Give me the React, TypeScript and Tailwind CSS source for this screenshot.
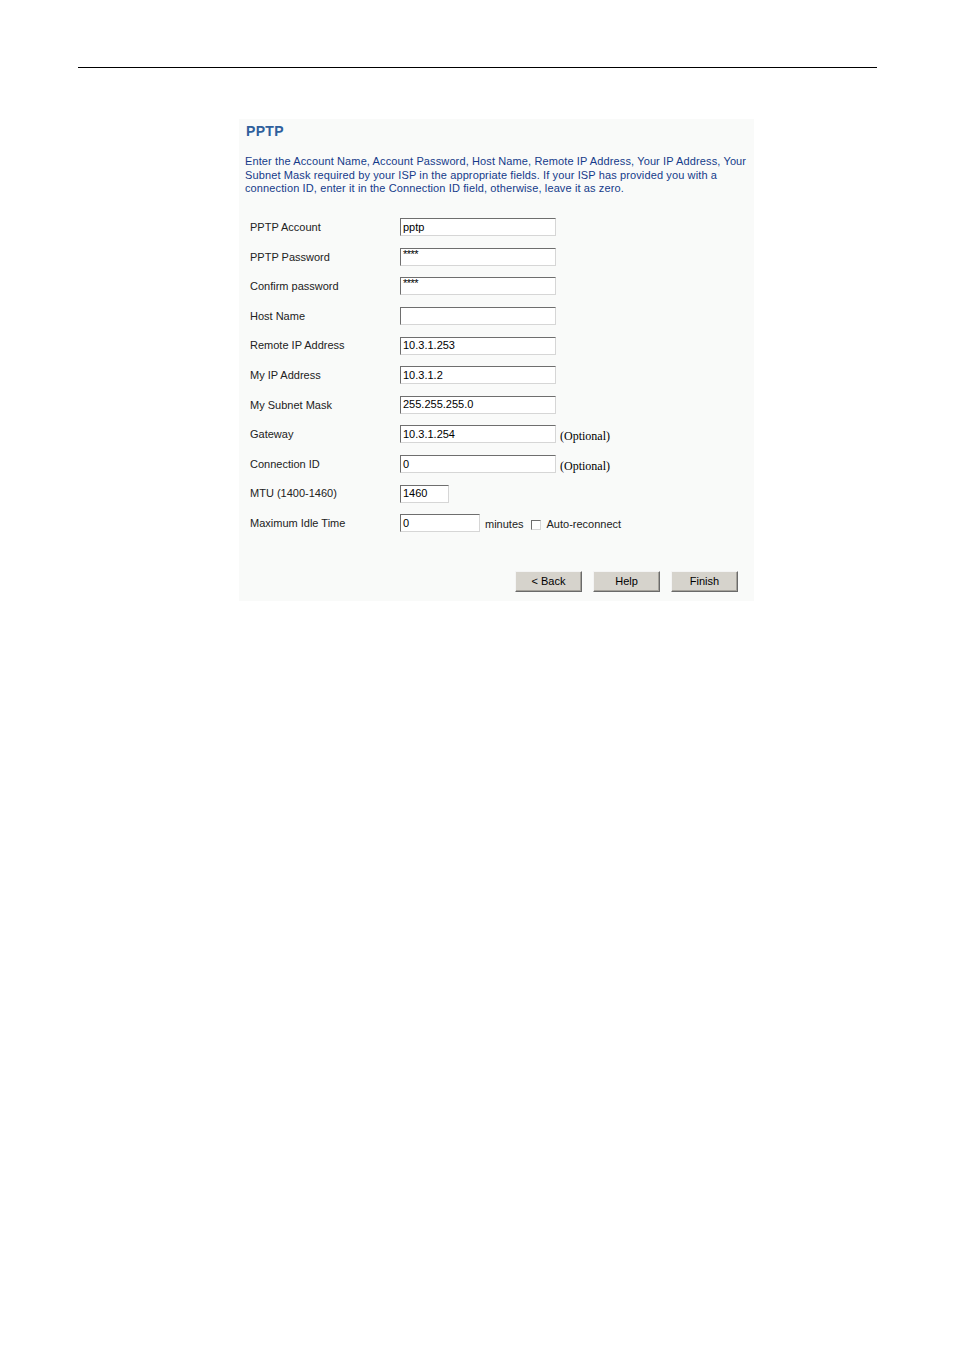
import React from 'react';

type Row = {
  label: string;
  value: string;
  width: string;
  suffix?: 'optional' | 'idle';
};

const rows: Row[] = [
  { label: 'PPTP Account', value: 'pptp', width: 'w-[156px]' },
  { label: 'PPTP Password', value: '****', width: 'w-[156px]' },
  { label: 'Confirm password', value: '****', width: 'w-[156px]' },
  { label: 'Host Name', value: '', width: 'w-[156px]' },
  { label: 'Remote IP Address', value: '10.3.1.253', width: 'w-[156px]' },
  { label: 'My IP Address', value: '10.3.1.2', width: 'w-[156px]' },
  { label: 'My Subnet Mask', value: '255.255.255.0', width: 'w-[156px]' },
  { label: 'Gateway', value: '10.3.1.254', width: 'w-[156px]', suffix: 'optional' },
  { label: 'Connection ID', value: '0', width: 'w-[156px]', suffix: 'optional' },
  { label: 'MTU (1400-1460)', value: '1460', width: 'w-[49px]' },
  { label: 'Maximum Idle Time', value: '0', width: 'w-[80px]', suffix: 'idle' },
];

function Field({ value, width }: { value: string; width: string }) {
  return (
    <div
      className={`${width} h-[18px] bg-white border border-t-[#6e6e6e] border-l-[#6e6e6e] border-r-[#d6d6d6] border-b-[#d6d6d6] flex items-center pl-[2px] text-[11px] leading-none text-black`}
    >
      {value === '****' ? <span className="text-[11px] -mt-[5px] tracking-[-0.5px]">****</span> : value}
    </div>
  );
}

function WizardButton({ children }: { children: React.ReactNode }) {
  return (
    <button className="w-[67px] h-[21px] bg-[#d6d3cc] border border-t-[#f4f4f4] border-l-[#f4f4f4] border-r-[#6a6a6a] border-b-[#6a6a6a] shadow-[inset_-1px_-1px_0_#a5a29b] text-[11px] text-black leading-none">
      {children}
    </button>
  );
}

export default function App() {
  return (
    <div className="min-h-[1351px] bg-white font-['Liberation_Sans',Arial,sans-serif]">
      <div className="pt-[67px] px-[78px]">
        <div className="h-px bg-black w-[799px]" />
      </div>

      <section className="ml-[239px] mt-[51px] w-[515px] h-[482px] bg-[#f9faf9] flex flex-col">
        <h1 className="pl-[7px] pt-[2px] text-[14px] font-bold text-[#2f5f9c] tracking-[0.3px]">PPTP</h1>
        <p className="pl-[6px] pt-[13px] pr-[6px] text-[11px] leading-[13.5px] text-[#153a8a] tracking-[0.12px]">
          Enter the Account Name, Account Password, Host Name, Remote IP Address, Your IP Address, Your Subnet Mask
          required by your ISP in the appropriate fields. If your ISP has provided you with a connection ID, enter it in
          the Connection ID field, otherwise, leave it as zero.
        </p>

        <div className="pt-[17px] flex flex-col">
          {rows.map((row) => (
            <div key={row.label} className="h-[29.6px] flex items-center">
              <span className="w-[161px] pl-[11px] text-[11px] text-[#222] shrink-0">{row.label}</span>
              <Field value={row.value} width={row.width} />
              {row.suffix === 'optional' && (
                <span className="ml-[4px] mt-[4px] text-[12px] font-['Liberation_Serif',serif] text-black">
                  (Optional)
                </span>
              )}
              {row.suffix === 'idle' && (
                <div className="flex items-center ml-[5px] mt-[3px] text-[11px] text-[#222]">
                  <span>minutes</span>
                  <span className="ml-[7px] w-[10px] h-[10px] bg-white border border-t-[#6e6e6e] border-l-[#6e6e6e] border-r-[#d6d6d6] border-b-[#d6d6d6]" />
                  <span className="ml-[6px]">Auto-reconnect</span>
                </div>
              )}
            </div>
          ))}
        </div>

        <div className="mt-[33px] flex justify-end gap-[11px] pr-[16px]">
          <WizardButton>&lt; Back</WizardButton>
          <WizardButton>Help</WizardButton>
          <WizardButton>Finish</WizardButton>
        </div>
      </section>
    </div>
  );
}
